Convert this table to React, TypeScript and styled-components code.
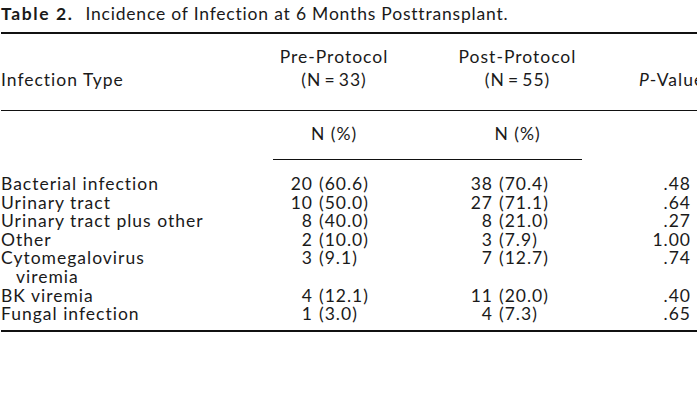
import styled, { createGlobalStyle } from "styled-components";

const GlobalStyle = createGlobalStyle`
  html, body {
    margin: 0;
    padding: 0;
    background: #fff;
  }
  body {
    overflow: hidden;
    font-family: Lato, "Noto Sans", sans-serif;
    color: #1a1a1a;
  }
`;

const Page = styled.div`
  width: 697px;
  height: 406px;
  overflow: hidden;
  padding-left: 1px;
  box-sizing: border-box;
`;

const Caption = styled.p`
  margin: 0;
  padding-top: 4px;
  height: 28px;
  font-size: 17.5px;
  letter-spacing: 0.8px;
  line-height: 20px;
  white-space: nowrap;
`;

const CaptionLabel = styled.b`
  font-weight: 700;
  letter-spacing: 1.6px;
  margin-right: 12px;
`;

const Table = styled.table`
  width: 712px;
  table-layout: fixed;
  border-collapse: collapse;
  font-size: 17.5px;
  letter-spacing: 1px;
  font-variant-numeric: tabular-nums;
  border-top: 2px solid #111;
  border-bottom: 2px solid #111;
`;

const Col = styled.col<{ $w: number }>`
  width: ${({ $w }) => $w}px;
`;

const HeadCell = styled.th<{ $align?: "left" | "center"; $indent?: number }>`
  font-weight: 400;
  text-align: ${({ $align }) => $align ?? "center"};
  vertical-align: bottom;
  line-height: 23px;
  padding: 11px 0 19px ${({ $indent }) => $indent ?? 0}px;
  border-bottom: 1px solid #111;
  white-space: nowrap;
`;

const Italic = styled.i`
  font-style: italic;
`;

const UnitCell = styled.td<{ $indent?: number; $rule?: boolean }>`
  text-align: center;
  line-height: 19px;
  padding: 13px 0 16px ${({ $indent }) => $indent ?? 0}px;
  border-bottom: ${({ $rule }) => ($rule ? "1px solid #111" : "none")};
`;

const Body = styled.tbody`
  tr:first-child td {
    padding-top: 15px;
  }
  tr:last-child td {
    padding-bottom: 6px;
  }
`;

const Cell = styled.td<{ $align?: "left" | "right"; $pad?: number }>`
  height: 18.6px;
  line-height: 18.6px;
  vertical-align: top;
  padding: 0;
  padding-left: ${({ $align, $pad }) => ($align === "right" ? 0 : $pad ?? 0)}px;
  padding-right: ${({ $align, $pad }) => ($align === "right" ? $pad ?? 0 : 0)}px;
  text-align: ${({ $align }) => $align ?? "left"};
  white-space: nowrap;
`;

const Label = styled.div`
  padding-left: 15px;
  text-indent: -15px;
`;

type Row = {
  label: string[];
  pre: [number, string];
  post: [number, string];
  p: string;
};

const rows: Row[] = [
  { label: ["Bacterial infection"], pre: [20, "60.6"], post: [38, "70.4"], p: ".48" },
  { label: ["Urinary tract"], pre: [10, "50.0"], post: [27, "71.1"], p: ".64" },
  { label: ["Urinary tract plus other"], pre: [8, "40.0"], post: [8, "21.0"], p: ".27" },
  { label: ["Other"], pre: [2, "10.0"], post: [3, "7.9"], p: "1.00" },
  { label: ["Cytomegalovirus", "viremia"], pre: [3, "9.1"], post: [7, "12.7"], p: ".74" },
  { label: ["BK viremia"], pre: [4, "12.1"], post: [11, "20.0"], p: ".40" },
  { label: ["Fungal infection"], pre: [1, "3.0"], post: [4, "7.3"], p: ".65" },
];

export default function App() {
  return (
    <Page>
      <GlobalStyle />
      <Caption>
        <CaptionLabel>Table 2.</CaptionLabel>Incidence of Infection at 6 Months Posttransplant.
      </Caption>
      <Table>
        <colgroup>
          <Col $w={272} />
          <Col $w={40} />
          <Col $w={82} />
          <Col $w={98} />
          <Col $w={89} />
          <Col $w={131} />
        </colgroup>
        <thead>
          <tr>
            <HeadCell $align="left">Infection Type</HeadCell>
            <HeadCell colSpan={2}>
              Pre-Protocol
              <br />
              (N&thinsp;=&thinsp;33)
            </HeadCell>
            <HeadCell colSpan={2} $indent={58}>
              Post-Protocol
              <br />
              (N&thinsp;=&thinsp;55)
            </HeadCell>
            <HeadCell $align="left" $indent={57}>
              <Italic>P</Italic>-Value
            </HeadCell>
          </tr>
        </thead>
        <tbody>
          <tr>
            <UnitCell />
            <UnitCell colSpan={2} $rule>
              N (%)
            </UnitCell>
            <UnitCell colSpan={2} $rule $indent={58}>
              N (%)
            </UnitCell>
            <UnitCell />
          </tr>
        </tbody>
        <Body>
          {rows.map((r) => (
            <tr key={r.label.join(" ")}>
              <Cell>
                <Label>
                  {r.label.map((part, i) => (
                    <span key={part}>
                      {i > 0 && <br />}
                      {part}
                    </span>
                  ))}
                </Label>
              </Cell>
              <Cell $align="right">{r.pre[0]}</Cell>
              <Cell $pad={6}>({r.pre[1]})</Cell>
              <Cell $align="right">{r.post[0]}</Cell>
              <Cell $pad={6}>({r.post[1]})</Cell>
              <Cell $align="right" $pad={22}>
                {r.p}
              </Cell>
            </tr>
          ))}
        </Body>
      </Table>
    </Page>
  );
}
